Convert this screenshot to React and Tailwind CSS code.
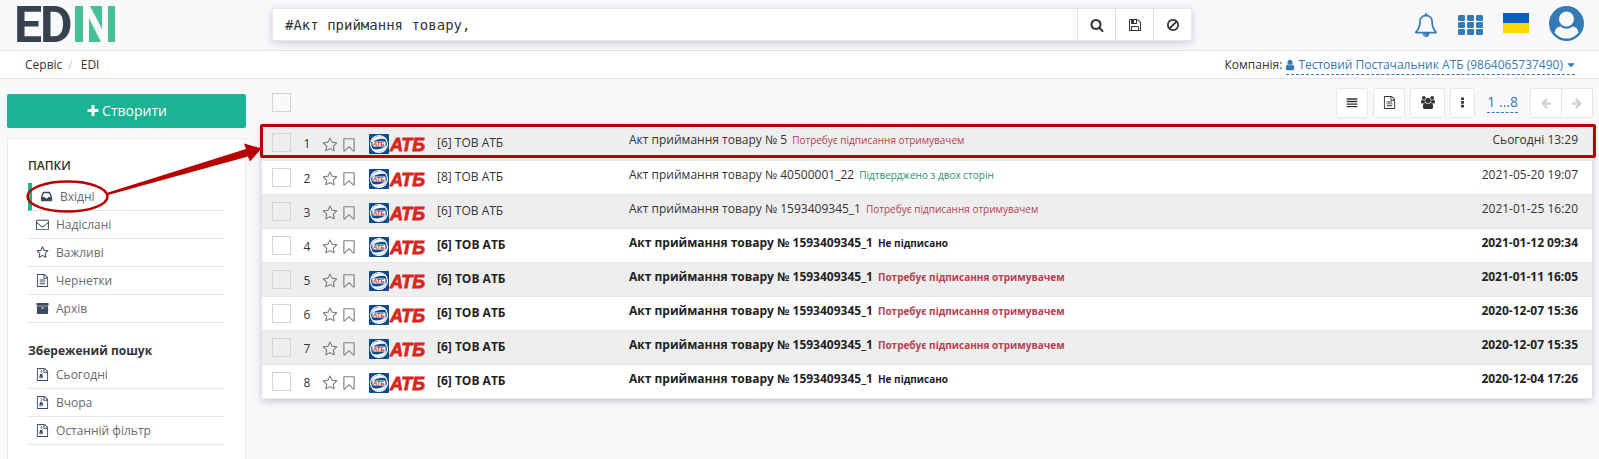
const FILE_FRAME =
  'M1596 380q28 28 48 76t20 88v1152q0 40-28 68t-68 28h-1344q-40 0-68-28t-28-68v-1600q0-40 28-68t68-28h896q40 0 88 20t76 48zm-444-244v376h376q-10-29-22-41l-313-313q-12-12-41-22zm384 1528v-1024h-416q-40 0-68-28t-28-68v-416h-768v1536h1280z';

const PATHS = {
  search:
    'M1216 832q0-185-131.5-316.5t-316.5-131.5-316.5 131.5-131.5 316.5 131.5 316.5 316.5 131.5 316.5-131.5 131.5-316.5zm512 832q0 52-38 90t-90 38q-54 0-90-38l-343-342q-179 124-399 124-143 0-273.5-55.5t-225-150-150-225-55.5-273.5 55.5-273.5 150-225 225-150 273.5-55.5 273.5 55.5 225 150 150 225 55.5 273.5q0 220-124 399l343 343q37 37 37 90z',
  plus: 'M1600 736v192q0 40-28 68t-68 28h-416v416q0 40-28 68t-68 28h-192q-40 0-68-28t-28-68v-416h-416q-40 0-68-28t-28-68v-192q0-40 28-68t68-28h416v-416q0-40 28-68t68-28h192q40 0 68 28t28 68v416h416q40 0 68 28t28 68z',
  save: 'M512 1536h768v-384h-768v384zm896 0h128v-896q0-14-10-38.5t-20-34.5l-281-281q-10-10-34-20t-39-10v416q0 40-28 68t-68 28h-576q-40 0-68-28t-28-68v-416h-128v1280h128v-416q0-40 28-68t68-28h832q40 0 68 28t28 68v416zm-384-928v-320q0-13-9.5-22.5t-22.5-9.5h-192q-13 0-22.5 9.5t-9.5 22.5v320q0 13 9.5 22.5t22.5 9.5h192q13 0 22.5-9.5t9.5-22.5zm640 32v928q0 40-28 68t-68 28h-1344q-40 0-68-28t-28-68v-1344q0-40 28-68t68-28h928q40 0 88 20t76 48l280 280q28 28 48 76t20 88z',
  ban: 'M1440 893q0-161-87-295l-754 753q137 89 297 89 111 0 211.5-43.5t173.5-116.5 116-174.5 43-212.5zm-999 299l755-754q-135-91-300-91-148 0-273 73t-198 199-73 274q0 162 89 299zm1223-299q0 157-61 300t-163.5 246-245 164-298.5 61-298.5-61-245-164-163.5-246-61-300 61-299.5 163.5-245.5 245-164 298.5-61 298.5 61 245 164 163.5 245.5 61 299.5z',
  bell: 'M912 1696q0-16-16-16-59 0-101.5-42.5t-42.5-101.5q0-16-16-16t-16 16q0 73 51.5 124.5t124.5 51.5q16 0 16-16zm-666-288h1300q-266-300-266-832 0-51-24-105t-69-103-121.5-80.5-169.5-31.5-169.5 31.5-121.5 80.5-69 103-24 105q0 532-266 832zm1482 0q0 52-38 90t-90 38h-448q0 106-75 181t-181 75-181-75-75-181h-448q-52 0-90-38t-38-90q50-42 91-88t85-119.5 74.5-158.5 50-206 19.5-260q0-152 117-282.5t307-158.5q-8-19-8-39 0-40 28-68t68-28 68 28 28 68q0 20-8 39 190 28 307 158.5t117 282.5q0 139 19.5 260t50 206 74.5 158.5 85 119.5 91 88z',
  user: 'M1536 1399q0 109-62.5 187t-150.5 78h-854q-88 0-150.5-78t-62.5-187q0-85 8.5-160.5t31.5-152 58.5-131 94-89 134.5-34.5q131 128 313 128t313-128q76 0 134.5 34.5t94 89 58.5 131 31.5 152 8.5 160.5zm-256-887q0 159-112.5 271.5t-271.5 112.5-271.5-112.5-112.5-271.5 112.5-271.5 271.5-112.5 271.5 112.5 112.5 271.5z',
  file:
    FILE_FRAME +
    'm-1024-864q0-14 9-23t23-9h704q14 0 23 9t9 23v64q0 14-9 23t-23 9h-704q-14 0-23-9t-9-23v-64zm736 224q14 0 23 9t9 23v64q0 14-9 23t-23 9h-704q-14 0-23-9t-9-23v-64q0-14 9-23t23-9h704zm0 256q14 0 23 9t9 23v64q0 14-9 23t-23 9h-704q-14 0-23-9t-9-23v-64q0-14 9-23t23-9h704z',
  zip:
    FILE_FRAME +
    'M640 256h128v128h-128zM768 384h128v128h-128zM640 512h128v128h-128zM768 640h128v128h-128zM687 832h162l107 349q8 27 8 52 0 83-72.500 137t-183.500 54-183.500-54-72.500-137q0-25 8-52 20-60 107-349zM708 1333q53 0 90.500-19t37.500-45-37.500-45-90.500-19-90.500 19-37.500 45 37.500 45 90.500 19z',
  envelope:
    'M1664 1504v-768q-32 36-69 66-268 206-426 338-51 43-83 67t-86.5 48.5-102.500 24.500h-2q-48 0-102.500-24.500t-86.500-48.500-83-67q-158-132-426-338-37-30-69-66v768q0 13 9.500 22.500t22.500 9.500h1472q13 0 22.500-9.500t9.500-22.500zm0-1051v-24.500l-.5-13-3-12.500-5.500-9-9-7.500-14-2.500h-1472q-13 0-22.500 9.500t-9.500 22.500q0 168 147 284 193 152 401 317 6 5 35 29.500t46 37.500 44.500 31.500 50.500 27.500 43 9h2q20 0 43-9t50.500-27.500 44.500-31.500 46-37.500 35-29.500q208-165 401-317 54-43 100.500-115.500t46.500-131.500zm128-37v1088q0 66-47 113t-113 47h-1472q-66 0-113-47t-47-113v-1088q0-66 47-113t113-47h1472q66 0 113 47t47 113z',
  star: 'M1201 1004l306-297-422-62-189-382-189 382-422 62 306 297-73 421 378-199 377 199zm527-357q0 22-26 48l-363 354 86 500q1 7 1 20 0 50-41 50-19 0-40-12l-449-236-449 236q-22 12-40 12-21 0-31.5-14.5t-10.5-35.5q0-6 2-20l86-500-364-354q-25-27-25-48 0-37 56-46l502-73 225-455q19-41 49-41t49 41l225 455 502 73q56 9 56 46z',
  bookmark:
    'M1408 256h-1024v1242l423-406 89-85 89 85 423 406v-1242zm12-128q23 0 44 9 33 13 52.5 41t19.5 62v1289q0 34-19.5 62t-52.5 41q-19 8-44 8-48 0-83-32l-441-424-441 424q-36 33-83 33-23 0-44-9-33-13-52.5-41t-19.5-62v-1289q0-34 19.5-62t52.5-41q21-9 44-9h1048z',
  inbox:
    'M1151 960h316q-1-3-2.5-8t-2.5-8l-212-496h-708l-212 496q-1 2-2.5 8t-2.5 8h316l95 192h320zm513 30v482q0 26-19 45t-45 19h-1408q-26 0-45-19t-19-45v-482q0-62 25-123l238-552q10-25 36.5-42t52.5-17h832q26 0 52.5 17t36.5 42l238 552q25 61 25 123z',
  archive:
    'M1088 832q0-26-19-45t-45-19h-256q-26 0-45 19t-19 45 19 45 45 19h256q26 0 45-19t19-45zm576-192v960q0 26-19 45t-45 19h-1408q-26 0-45-19t-19-45v-960q0-26 19-45t45-19h1408q26 0 45 19t19 45zm64-448v256q0 26-19 45t-45 19h-1536q-26 0-45-19t-19-45v-256q0-26 19-45t45-19h1536q26 0 45 19t19 45z',
  users:
    'M593 896q-162 5-265 128h-134q-82 0-138-40.5t-56-118.5q0-353 124-353 6 0 43.5 21t97.5 42.5 119 21.5q67 0 133-23-5 37-5 66 0 139 81 256zm1071 637q0 120-73 189.5t-194 69.5h-874q-121 0-194-69.5t-73-189.5q0-53 3.5-103.5t14-109 26.5-108.5 43-97.5 62-81 85.5-53.5 111.5-20q10 0 43 21.5t73 48 107 48 135 21.5 135-21.5 107-48 73-48 43-21.5q61 0 111.5 20t85.5 53.5 62 81 43 97.5 26.5 108.5 14 109 3.5 103.5zm-1024-1277q0 106-75 181t-181 75-181-75-75-181 75-181 181-75 181 75 75 181zm704 384q0 159-112.5 271.5t-271.5 112.5-271.5-112.5-112.5-271.5 112.5-271.5 271.5-112.5 271.5 112.5 112.5 271.5zm576 225q0 78-56 118.5t-138 40.5h-134q-103-123-265-128 81-117 81-256 0-29-5-66 66 23 133 23 59 0 119-21.5t97.5-42.5 43.5-21q124 0 124 353zm-128-609q0 106-75 181t-181 75-181-75-75-181 75-181 181-75 181 75 75 181z',
  bars: 'M96 192h1600v200h-1600zM96 576h1600v200h-1600zM96 960h1600v200h-1600zM96 1344h1600v200h-1600z',
  dots: 'M704 192h384v352h-384zM704 704h384v352h-384zM704 1216h384v352h-384z',
  caret: 'M1408 704q0 26-19 45l-448 448q-19 19-45 19t-45-19l-448-448q-19-19-19-45t19-45 45-19h896q26 0 45 19t19 45z',
  arrow:
    'M1664 896v128q0 53-32.5 90.5t-84.5 37.5h-704l293 294q38 36 38 90t-38 90l-75 76q-37 37-90 37-52 0-91-37l-651-652q-37-37-37-90 0-52 37-91l651-650q38-38 91-38 52 0 90 38l75 74q38 38 38 91t-38 91l-293 293h704q52 0 84.5 37.5t32.5 90.5z',
};

function Icon({ name, className = 'size-3.5', box = '0 0 1792 1792', flip = false }) {
  return (
    <svg viewBox={box} fill="currentColor" className={'shrink-0 ' + className} aria-hidden="true">
      <path d={PATHS[name]} transform={flip ? 'translate(1792 0) scale(-1 1)' : undefined} />
    </svg>
  );
}

function EdinLogo() {
  return (
    <svg width="100" height="38" viewBox="0 0 100 38" className="overflow-visible" role="img" aria-label="EDIN">
      <g fill="#38424f" fontFamily="Roboto, sans-serif" fontWeight="700" fontSize="50">
        <text x="-3" y="37">E</text>
        <text x="23" y="37">D</text>
      </g>
      <g fill="#45c095">
        <rect x="58" y="1" width="8" height="36" />
        <polygon points="72,13 72,37 84,37" />
        <polygon points="73,1 85,1 85,24" />
        <rect x="91" y="1" width="7" height="36" />
      </g>
    </svg>
  );
}

function AtbLogo() {
  return (
    <svg width="60" height="20" viewBox="0 0 60 20" role="img" aria-label="АТБ" className="block">
      <rect width="20" height="20" rx="1" fill="#0d4a8f" />
      <circle cx="10" cy="10" r="8.500" fill="none" stroke="#fff" strokeWidth="1.200" />
      <path d="M3 8A7.500 7.500 0 0 1 15.500 4.500Q8 3.800 3 8zM17 12A7.500 7.500 0 0 1 4.500 15.500Q11 17 17 12z" fill="#fff" stroke="#fff" strokeWidth="0.600" />
      <rect x="3.500" y="7.500" width="13" height="5" rx="1" fill="#fff" />
      <g fill="#d9261c" fontFamily="'Liberation Sans', Arial, sans-serif" fontWeight="700" fontStyle="italic">
        <text x="4" y="12" fontSize="6">АТБ</text>
        <text x="21" y="17" fontSize="18" stroke="#d9261c" strokeWidth="0.800">АТБ</text>
      </g>
    </svg>
  );
}

const FOLDERS = [
  { icon: 'inbox', label: 'Вхідні', active: true },
  { icon: 'envelope', label: 'Надіслані' },
  { icon: 'star', label: 'Важливі' },
  { icon: 'file', label: 'Чернетки' },
  { icon: 'archive', label: 'Архів' },
];

const SAVED = [
  { icon: 'zip', label: 'Сьогодні' },
  { icon: 'zip', label: 'Вчора' },
  { icon: 'zip', label: 'Останній фільтр' },
];

const NEEDS = 'Потребує підписання отримувачем';
const ROWS = [
  { from: '[6] ТОВ АТБ', no: '5', status: NEEDS, tone: 'red', date: 'Сьогодні 13:29' },
  { from: '[8] ТОВ АТБ', no: '40500001_22', status: 'Підтверджено з двох сторін', tone: 'green', date: '2021-05-20 19:07' },
  { from: '[6] ТОВ АТБ', no: '1593409345_1', status: NEEDS, tone: 'red', date: '2021-01-25 16:20' },
  { from: '[6] ТОВ АТБ', no: '1593409345_1', status: 'Не підписано', tone: 'plain', date: '2021-01-12 09:34', unread: true },
  { from: '[6] ТОВ АТБ', no: '1593409345_1', status: NEEDS, tone: 'red', date: '2021-01-11 16:05', unread: true },
  { from: '[6] ТОВ АТБ', no: '1593409345_1', status: NEEDS, tone: 'red', date: '2020-12-07 15:36', unread: true },
  { from: '[6] ТОВ АТБ', no: '1593409345_1', status: NEEDS, tone: 'red', date: '2020-12-07 15:35', unread: true },
  { from: '[6] ТОВ АТБ', no: '1593409345_1', status: 'Не підписано', tone: 'plain', date: '2020-12-04 17:26', unread: true },
];

const TONES = { red: 'text-[#b9404f]', green: 'text-[#1f9378]', plain: 'text-[#222222]' };

function Tick({ label }) {
  return (
    <input
      type="checkbox"
      aria-label={label}
      className="block size-[19px] appearance-none border border-[#d8d5d0] bg-transparent"
    />
  );
}

function NavList({ items }) {
  return (
    <ul>
      {items.map(({ icon, label, active }) => (
        <li key={label}>
          <a
            href="#"
            className={
              'flex h-7 items-center border-b border-[#e4e6ea] pl-2 text-[#676a6c] ' +
              (active ? 'border-l-4 border-l-[#1ab394]' : '')
            }
          >
            <span className="flex w-5 text-[#3c4b5e]">
              <Icon name={icon} className="size-[13px]" />
            </span>
            {label}
          </a>
        </li>
      ))}
    </ul>
  );
}

function Header() {
  return (
    <header className="flex h-[51px] shrink-0 items-start border-b border-[#e4e5ec] pl-[17px] pr-[15px]">
      <a href="#" className="mt-[5px] w-[255px] shrink-0">
        <EdinLogo />
      </a>
      <form className="mt-2 flex h-[33px] w-[920px] shrink border border-[#e4e6ec] bg-white shadow-[0_2px_8px_rgba(60,70,110,0.25)]">
        <input
          type="text"
          aria-label="Пошук"
          defaultValue="#Акт приймання товару,"
          className="min-w-0 flex-1 bg-transparent px-3 font-['DejaVu_Sans_Mono',monospace] text-sm text-[#333333] outline-none"
        />
        {[
          ['search', 'Знайти'],
          ['save', 'Зберегти пошук'],
          ['ban', 'Очистити'],
        ].map(([icon, label]) => (
          <button key={icon} type="button" aria-label={label} className="flex w-[38px] items-center justify-center border-l border-[#dfe1e5] text-[#333333]">
            <Icon name={icon} />
          </button>
        ))}
      </form>
      <div className="ml-auto flex h-[46px] items-center gap-5 text-[#337ab7]">
        <button type="button" aria-label="Сповіщення" className="mt-1">
          <Icon name="bell" className="size-6" />
        </button>
        <button type="button" aria-label="Сервіси" className="mt-1">
          <svg width="25" height="21" viewBox="0 0 25 21" fill="currentColor" aria-hidden="true">
            {[0, 7, 14].map((y) => [0, 9, 18].map((x) => <rect key={x + '-' + y} x={x} y={y} width="7" height="6" rx="1.300" />))}
          </svg>
        </button>
        <button type="button" aria-label="Українська" className="flex h-5 w-[26px] flex-col">
          <span className="w-full flex-1 bg-[#0a5cbf]" />
          <span className="w-full flex-1 bg-[#ffd600]" />
        </button>
        <button type="button" aria-label="Профіль">
          <svg width="35" height="35" viewBox="0 0 35 35" aria-hidden="true">
            <circle cx="17.500" cy="17.500" r="17.500" fill="currentColor" />
            <circle cx="17.500" cy="13" r="7.500" fill="#f9f9fc" />
            <path d="M5.500 26.500Q6.800 20.500 11.500 20.500Q14 22.800 17.500 22.800T23.500 20.500Q28.200 20.500 29.500 26.500Q25 32.500 17.500 32.500T5.500 26.500z" fill="#f9f9fc" />
          </svg>
        </button>
      </div>
    </header>
  );
}

function Breadcrumbs() {
  return (
    <div className="flex h-7 shrink-0 items-center border-b border-[#e4e5ec] bg-white pl-[25px] pr-6 text-xs text-[#333333]">
      <nav className="flex items-center">
        <a href="#">Сервіс</a>
        <span className="px-[6px] text-[#cccccc]">/</span>
        <a href="#" className="pl-[2px]">EDI</a>
      </nav>
      <div className="ml-auto flex items-center gap-1">
        Компанія:
        <button type="button" className="flex items-center gap-1 border-b border-dashed border-[#337ab7] pt-[3px] pb-px text-[#337ab7]">
          <Icon name="user" className="-mx-0.5 size-3" />
          Тестовий Постачальник АТБ (9864065737490)
          <Icon name="caret" className="-mx-0.5 size-3" />
        </button>
      </div>
    </div>
  );
}

function Sidebar() {
  return (
    <aside className="flex w-[239px] shrink-0 flex-col gap-[10px] pt-[15px]">
      <button type="button" className="flex h-[34px] shrink-0 items-center justify-center gap-0.5 rounded-xs bg-[#1ab394] text-sm text-white">
        <Icon name="plus" />
        Створити
      </button>
      <div className="flex-1 border border-b-0 border-[#e7eaec] bg-white px-5 pt-[17px] text-xs">
        <h2 className="h-[27px] font-semibold leading-5 text-[#333333]">ПАПКИ</h2>
        <NavList items={FOLDERS} />
        <h2 className="mt-[18px] h-5 font-bold leading-5 text-[#333333]">Збережений пошук</h2>
        <NavList items={SAVED} />
      </div>
    </aside>
  );
}

const TOOL = 'flex h-[30px] items-center justify-center rounded-xs border border-[#e4e6ea] bg-white text-[#333333] ';

function Toolbar() {
  return (
    <div className="-mr-px flex h-[47px] items-center pl-[10px]">
      <Tick label="Вибрати всі" />
      <div className="ml-auto flex items-center gap-[5px]">
        <button type="button" aria-label="Список" className={TOOL + 'w-8'}>
          <Icon name="bars" className="size-3" />
        </button>
        <button type="button" aria-label="Документ" className={TOOL + 'w-8'}>
          <Icon name="file" className="size-[13px]" />
        </button>
        <button type="button" aria-label="Користувачі" className={TOOL + 'w-[35px]'}>
          <Icon name="users" box="0 0 1920 1792" className="h-[13px] w-[14px]" />
        </button>
        <button type="button" aria-label="Більше" className={TOOL + 'w-[25px]'}>
          <Icon name="dots" className="size-[13px]" />
        </button>
        <a href="#" className="mx-[7px] border-b border-dashed border-[#337ab7] text-sm text-[#337ab7]">
          1 ...8
        </a>
        <div className="flex">
          <button type="button" disabled aria-label="Назад" className={TOOL + 'w-8'}>
            <Icon name="arrow" className="size-3 text-[#d2d4d6]" />
          </button>
          <button type="button" disabled aria-label="Вперед" className={TOOL + '-ml-px w-8'}>
            <Icon name="arrow" flip className="size-3 text-[#d2d4d6]" />
          </button>
        </div>
      </div>
    </div>
  );
}

function Documents() {
  return (
    <div className="relative bg-white shadow-[0_2px_8px_rgba(60,70,110,0.3)]">
      <table className="w-full table-fixed border-collapse text-xs text-[#333333]">
        <colgroup>
          <col className="w-9" />
          <col className="w-[18px]" />
          <col className="w-[46px]" />
          <col className="w-[68px]" />
          <col className="w-48" />
          <col />
          <col className="w-40" />
        </colgroup>
        <tbody>
          {ROWS.map((row, i) => (
            <tr key={i} className={'h-[34px] border-b border-[#e4e6e8] ' + (i % 2 ? 'bg-white' : 'bg-[#eeeeee]')}>
              <td className="pl-[10px]">
                <Tick label={'Вибрати ' + (i + 1)} />
              </td>
              <td className="pt-[3px] text-center">{i + 1}</td>
              <td className="pl-[6px]">
                <div className="flex items-center gap-[3px] pt-1 text-[#808080]">
                  <button type="button" aria-label="Важливе">
                    <Icon name="star" className="size-4" />
                  </button>
                  <button type="button" aria-label="Закладка">
                    <Icon name="bookmark" className="size-4" />
                  </button>
                </div>
              </td>
              <td className="pl-[7px] pt-[3px]">
                <AtbLogo />
              </td>
              <td className={'pl-[7px] ' + (row.unread ? 'font-bold text-[#222222]' : '')}>{row.from}</td>
              <td className={'pl-[7px] pt-1 align-top leading-5 ' + (row.unread ? 'font-bold text-[#222222]' : '')}>
                <a href="#">Акт приймання товару № {row.no}</a>
                <span className={'ml-[5px] text-[10px] ' + TONES[row.tone]}>{row.status}</span>
              </td>
              <td className={'pr-[14px] pt-1 text-right align-top leading-5 ' + (row.unread ? 'font-bold text-[#222222]' : '')}>{row.date}</td>
            </tr>
          ))}
        </tbody>
      </table>
      <div className="pointer-events-none absolute -left-0.5 -right-1 -top-0.5 h-[34px] rounded-xs border-3 border-[#b80000]" />
    </div>
  );
}

export default function App() {
  return (
    <div className="relative flex min-h-screen flex-col overflow-hidden bg-[#f9f9fc] font-['Open_Sans',sans-serif]">
      <Header />
      <Breadcrumbs />
      <div className="flex flex-1 gap-4 px-[7px]">
        <Sidebar />
        <main className="min-w-0 flex-1">
          <Toolbar />
          <Documents />
        </main>
      </div>
      <svg className="pointer-events-none absolute left-0 top-0" width="270" height="220" viewBox="0 0 270 220" aria-hidden="true">
        <ellipse cx="67.500" cy="196.500" rx="40" ry="15" fill="none" stroke="#b80000" strokeWidth="2.500" />
        <path d="M108 192.500L246 149L244 143.500L261.500 148.500L250 161.500L248 156.500L108 195z" fill="#b80000" />
      </svg>
    </div>
  );
}
